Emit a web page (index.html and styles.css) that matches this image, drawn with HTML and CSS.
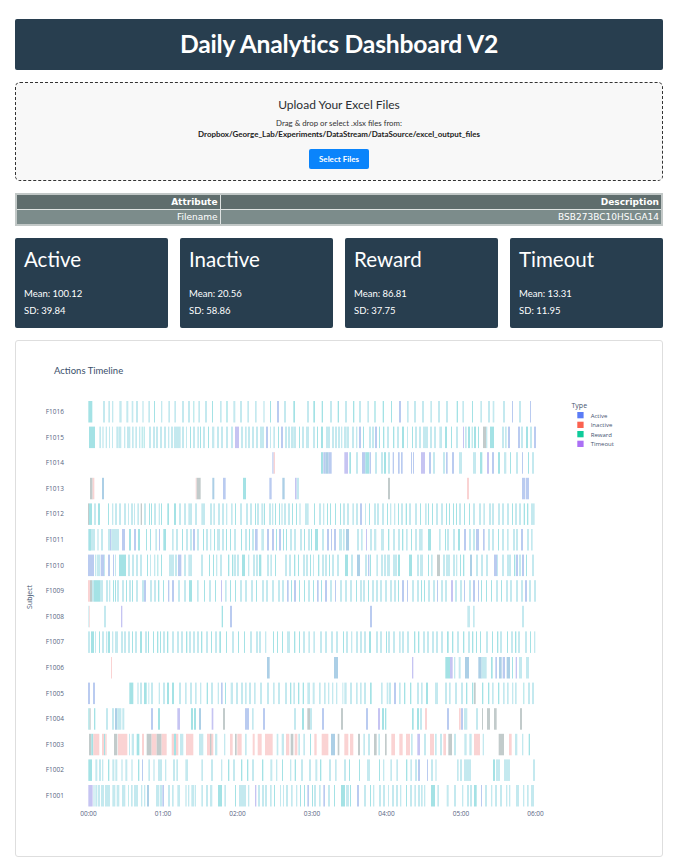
FILE: index.html
```html
<!DOCTYPE html>
<html lang="en">
<head>
<meta charset="utf-8">
<title>Daily Analytics Dashboard V2</title>
<link rel="stylesheet" href="styles.css">
</head>
<body>
<div class="page">
  <header class="title-bar"><h1>Daily Analytics Dashboard V2</h1></header>
  <section class="upload">
    <h2>Upload Your Excel Files</h2>
    <p class="hint">Drag &amp; drop or select .xlsx files from:</p>
    <p class="path">Dropbox/George_Lab/Experiments/DataStream/DataSource/excel_output_files</p>
    <button class="select-btn">Select Files</button>
  </section>
  <table class="meta">
    <tr><th class="col-a">Attribute</th><th>Description</th></tr>
    <tr><td class="col-a">Filename</td><td>BSB273BC10HSLGA14</td></tr>
  </table>
  <section class="cards">
    <div class="card"><h3>Active</h3><p>Mean: 100.12</p><p>SD: 39.84</p></div>
    <div class="card"><h3>Inactive</h3><p>Mean: 20.56</p><p>SD: 58.86</p></div>
    <div class="card"><h3>Reward</h3><p>Mean: 86.81</p><p>SD: 37.75</p></div>
    <div class="card"><h3>Timeout</h3><p>Mean: 13.31</p><p>SD: 11.95</p></div>
  </section>
  <section class="chart">
    <svg id="timeline" class="plot" width="646" height="515" viewBox="0 0 646 515" xmlns="http://www.w3.org/2000/svg">
      <text class="plot-title" x="38" y="33">Actions Timeline</text>
      <text class="axis-title" transform="translate(15.500 256) rotate(-90)" text-anchor="middle">Subject</text>
      <g class="legend">
        <text class="legend-title" x="555.500" y="67">Type</text>
        <rect x="561.300" y="71" width="6.300" height="6.300" fill="#5b7cf6"/><text x="574.700" y="76.700">Active</text>
        <rect x="561.300" y="80.700" width="6.300" height="6.300" fill="#fb6250"/><text x="574.700" y="86">Inactive</text>
        <rect x="561.300" y="90" width="6.300" height="6.300" fill="#0fcb9a"/><text x="574.700" y="95.700">Reward</text>
        <rect x="561.300" y="99.700" width="6.300" height="6.300" fill="#ab70f5"/><text x="574.700" y="105">Timeout</text>
      </g>
      <g id="bars" class="bars"></g>
      <g id="labels" class="tick"></g>
    </svg>
  </section>
</div>
<script src="app.js"></script>
</body>
</html>
```
FILE: styles.css
```css
* { box-sizing: border-box; }
html, body { margin: 0; padding: 0; background: #fff; }
body { font-family: Lato, "Open Sans", sans-serif; color: #2c3e50; }
.page { display: flex; flex-direction: column; gap: 12px; padding: 19px 14px 8px 15px; }
.title-bar { height: 51px; background: #283e4f; border-radius: 2px; display: flex; align-items: center; justify-content: center; }
.title-bar h1 { margin: 0; color: #fff; font-size: 24.700px; font-weight: 700; line-height: 1; letter-spacing: -0.2px; }
.upload { height: 99px; background: #f8f8f8; border: 1px dashed #333; border-radius: 5px; display: flex; flex-direction: column; align-items: center; padding-top: 14px; }
.upload h2 { margin: 0 0 5.500px; font-size: 12px; font-weight: 400; line-height: 15px; color: #2b2f33; }
.hint { margin: 0; font-size: 7.800px; line-height: 11.500px; color: #333; }
.path { margin: 0 0 8px; font-size: 7.950px; line-height: 11.500px; font-weight: 700; color: #222; }
.select-btn { width: 60px; height: 20px; padding: 0; border: 0; border-radius: 2px; background: #0a84fb; color: #fff; font: 700 8px Lato, sans-serif; }
.meta { width: 100%; height: 33px; border-collapse: collapse; border: 2px solid #c2c8c7; table-layout: fixed; color: #fff; font-family: "DejaVu Sans", sans-serif; font-size: 9px; }
.meta th, .meta td { padding: 0 2px 0 0; border: 1px solid #dfe3e2; text-align: right; height: 15px; line-height: 13px; }
.meta th { background: #5f6d6d; font-weight: 700; }
.meta td { background: #7c8c8b; font-weight: 400; }
.meta .col-a { width: 204px; }
.cards { display: grid; grid-template-columns: repeat(4, 1fr); gap: 12px; }
.card { height: 90px; padding: 8px 9px 0; background: #283e4f; border-radius: 2px; color: #fff; }
.card h3 { margin: 0 0 13px; font-size: 20.500px; font-weight: 400; line-height: 26px; }
.card p { margin: 0; font-size: 9.500px; line-height: 17px; }
.chart { height: 517px; border: 1px solid #dedede; border-radius: 3px; background: #fff; }
.plot { display: block; font-family: "Open Sans", Lato, sans-serif; }
.plot-title { font-family: Lato, sans-serif; font-size: 9.500px; fill: #3b4f6b; }
.axis-title { font-size: 7px; fill: #3b4f6b; }
.legend text { font-size: 6px; fill: #44546f; }
.legend .legend-title { font-size: 7px; }
.tick text { font-size: 6.500px; fill: #56657f; }
.bars { filter: blur(0.35px); }
```
FILE: app.js
```js
(function () {
  var NS = 'http://www.w3.org/2000/svg';
  var OX = 16, OY = 341;
  var X0 = 88.5, HOUR = 74.5, TOP = 401, STEP = 25.6, BAR_H = 21.5;
  var COL = { c: '#c4e9ef', t: '#a4e2e5', b: '#bacbf0', p: '#fad3d3', g: '#c2cbcb', l: '#c6c4f2', n: '#accfe6' };

  // Each row: segments of [origin x, "from-to[colour]" measured at 1/3 px].
  var rows = [
    ['F1016', [
      [30, '175-187t 219-225 235-240 246-250 268-275 289-295 305-310 318-324 337-341 355-360 372-375t 393-397 415-420 433-438 456-462 474-480 490-493t 505-510 525-531 546-549t 570-575 589-593t 610-616 630-636 652-657 675-680 700-704 720-723t 741-747b'],
      [280, '12-18 40-45t 81-87 100-105t 125-129t 150-156 173-177t 195-201 219-223t 237-243 262-267 283-287t 308-312t 333-336t 357-363b 381-386 402-408 426-432 451-456 474-480 498-504 530-534t 547-552 576-579t 601-606 624-630 638-643 669-675 696-699b 717-723 750-753b']
    ]],
    ['F1015', [
      [30, '177-195t 208-213 217-221 227-231 237-240 246-249 259-264 265-274 282-286 291-301 306-311 316-321 327-331 335-338t 341-344t 357-363 369-375 378-384 390-396 402-408 414-418 423-429 432-441 441-452 456-462 468-471 480-483t 489-495 502-507 510-513t 519-525 534-537t 546-553 561-567 573-579 588-594 603-609 615-627l 633-639 645-650 654-660 666-672 678-684 690-702 708-714b 720-723 730-735 744-747t'],
      [280, '3-9b 15-21 24-30 33-40 40-48 57-60t 66-72 78-87 99-105 111-114t 123-129t 138-150 156-162 165-171 174-180 183-187 192-200 201-207 216-222 228-232 237-243b 249-252t 267-273 276-282 285-291b 297-300t 309-313t 321-327 339-343t 351-357 366-372t 381-384 396-399t 405-411 417-423 429-444 450-456 462-468 478-486 495-501t 513-516t 528-534 549-552l 555-560 564-570t 575-578t 582-588t 594-597t 609-618g 618-622 630-642t 666-672 675-680 684-690b 714-720b 723-729 738-744t 750-756 762-768b']
    ]],
    ['F1014', [
      [30, '727-731b 731-735p'],
      [280, '123-129t 130-136b 136-146n 146-155b 193-204l 208-213t 228-234 246-256b 256-268t 269-273b 285-291 303-309 312-318t 324-330 338-342b 354-359b 363-368b 393-396b 399-402b 423-435l 447-453b 459-465 489-495 498-503b 516-522b 537-546 579-588 600-607t 621-627l 636-642b 654-660t 672-679 690-693t 708-714 726-729b 744-747t 756-762']
    ]],
    ['F1013', [
      [30, '180-188g 188-193p 216-222n 497-500p 500-512g 547-553n 579-587b 639-648t 718-725b'],
      [280, '7-14n 45-50l 50-57 324-330g 561-567p 726-736b 738-747b']
    ]],
    ['F1012', [
      [80, '24-27g 27-36t 42-48c 54-60t 84-87t 96-100 105-111 117-123 132-138 144-147 153-159 162-165 172-177 182-186g 192-198 207-210t 213-216t 222-228 236-240 243-246t 262-267t 282-288t 297-303 312-318 325-336 345-351 364-375 390-396 400-405 414-420 426-432 438-442 453-458 465-468t 480-486 498-504 510-516 525-528t 531-537 544-550 552-555t 567-573 576-580 585-588t 597-600t 604-608 612-618 624-630 636-639t 648-651t 658-662 675-686'],
      [310, '12-15t 27-33 39-43 51-54t 60-63t 75-78t 90-93t 99-105 111-117 127-132 138-144 150-156b 165-168 177-180t 192-198 201-207 216-222 231-234t 240-244 252-256 264-267t 273-279 287-291t 297-303 315-321 330-333t 345-350 354-357t 366-369t 378-384 393-399 408-411t 417-420t 429-432t 438-441t 447-453 462-465t 477-480t 489-495 507-513 520-525 537-543 546-552 564-570 576-582 591-597 606-609t 615-621 627-633 641-645t 651-655t 663-674']
    ]],
    ['F1011', [
      [80, '24-45 27-33t 52-56 63-69 84-90 90-94b 94-117 126-135b 147-153t 162-168b 174-180t 198-201t 210-213t 226-231 237-240b 250-258t 276-281 288-294 306-309t 318-324 330-336 339-345b 351-357 369-372t 378-384 390-394 402-405t 411-420 426-432 438-441t 450-453t 462-468 483-486t 495-501 507-510t 516-522 525-533b 544-552 561-567b 576-582b 588-591t 597-603b 609-612t 618-621t 630-636 642-648 660-666 672-675t 684-690'],
      [310, '3-6t 15-24t 36-42 51-57b 63-66b 72-78b 87-96 99-104 108-117n 141-147 153-158 168-171l 180-186 192-199 213-222 234-238t 249-255 264-270 276-280t 288-293 303-306t 315-321 327-338 354-363t 387-392 405-408t 411-417 429-435 444-450t 462-468b 477-483 489-495 498-507b 519-524b 534-540 546-552 564-567t 576-582 591-596 609-615 618-624 633-639b 651-657 663-668']
    ]],
    ['F1010', [
      [80, '24-42b 45-48 50-60 62-72b 72-75 84-90b 99-102b 105-108 117-138t 144-150 156-162 168-174 180-186 201-204t 210-213 222-226 232-235t 243-246t 267-282 285-291 294-304b 312-318 325-336 363-369 387-390t 399-402t 408-412 420-426 444-448t 456-460t 462-468 471-477 486-495t 504-508 519-525 528-534 537-544t 561-567 571-576 585-588t 615-621 627-633 642-646t 654-657t 669-675 678-684'],
      [310, '0-3t 9-12 24-28t 36-42 45-51 57-60t 66-72 81-87 105-114t 123-129 141-150n 165-171 174-178b 180-183t 199-204 213-219 222-228 231-240 249-261 264-270t 297-306t 321-327 330-339 354-357t 363-368 381-390g 399-405 408-420 429-435 438-442 450-453t 459-463t 480-486n 498-504 513-519 528-534 552-561b 561-564 576-582 591-603 612-616t 618-624b 627-633 636-642b 648-651t 666-672']
    ]],
    ['F1009', [
      [80, '24-30p 30-36g 36-42 42-60t 60-69 78-84 87-91 99-102t 105-108t 111-117 126-132 138-141t 147-153 156-159t 168-174 186-192 192-198b 210-216 222-228 234-238t 249-252t 264-268b 276-282b 294-300 312-318 327-336t 351-356 372-375t 387-393 405-408t 423-426l 435-440 450-453t 465-468t 480-486 495-501 513-519 528-531t 546-552 558-564 576-582 594-600 606-612 621-626b 633-636t 642-648b 657-660t 672-675t 684-690'],
      [310, '9-12t 21-26b 33-36t 45-51b 60-66 75-78b 90-96 105-111 120-126 138-141t 150-156 159-165 174-177t 186-192 198-204 210-216 225-231 240-246 252-258 264-267t 276-282b 291-294b 306-312 321-327 333-336t 342-345t 354-360 369-375 381-384b 393-399 405-411 423-429l 435-441 450-456 462-465b 477-483 489-495b 504-507b 513-516t 528-531t 543-546t 558-564 573-576t 588-594 600-606 618-624 633-639 645-651b 657-663 672-678']
    ]],
    ['F1008', [
      [80, '25-28 28-30p 72-78 123-127l 425-429t 450-456b'],
      [310, '180-186b 472-480 489-494 636-642']
    ]],
    ['F1007', [
      [80, '24-30 33-42t 45-48 57-60t 66-72 78-82 84-90t 96-100 105-114 123-129 132-138 144-150 156-159t 165-171 180-186t 195-201 204-207t 219-222t 231-235t 240-243t 249-255 261-265t 276-282 291-297 303-309 318-322t 327-333 339-345 351-357 363-367t 378-384 393-396t 405-411 418-423t 438-441t 456-462 474-477t 492-495t 510-516 528-534 537-543 555-559 579-582t 591-594t 606-609t 621-630 642-646t 657-660t 669-675 685-690'],
      [310, '10-15 30-36 45-51 63-69 78-84 99-102t 108-114 123-127 138-144 150-156 162-168 177-183t 198-204 210-216 228-231t 234-240 249-255 267-272 276-282 291-297 312-316t 324-328t 339-345 351-357 366-372 378-384 393-399 411-416t 426-430t 441-447 459-463t 474-480 486-490t 498-501t 510-513t 528-534 546-549t 561-565t 570-576 591-594t 603-609 615-619t 624-630 645-651 660-663t 672-676']
    ]],
    ['F1006', [
      [80, '93-96p 561-569n'],
      [310, '72-84n 306-310l 406-420t 420-428l 432-436 446-452 465-477n 505-515n 515-530 543-548t 556-561b 567-575n 578-585b 590-600n 606-609t 617-621l 627-636 648-657']
    ]],
    ['F1005', [
      [80, '24-30b 39-45b 148-160t 172-176 180-186 192-200t 205-208 213-219 236-240 249-255 261-267t 276-282t 297-303 315-320 330-336 345-350 360-364 380-384t 393-399 413-417 423-428b 435-438t 452-459 468-474 483-489 495-500 507-513 522-527 540-546 561-567 579-584 594-600 615-621 630-634t 640-645 654-658t 668-672t 682-690'],
      [310, '8-14 27-32 42-47 54-58 66-70 78-82 97-100 103-110 120-126 138-143 150-155 162-168 180-185t 213-218 230-235 237-243 252-258b 267-272 282-286t 300-304t 321-327 333-338 348-354t 375-384 405-411 417-422 435-441 453-459 468-472t 486-490t 492-497g 516-520t 534-538t 546-551 564-568t 579-584 591-596 606-610 615-620 640-643t 654-660 666-672']
    ]],
    ['F1004', [
      [80, '25-29t 29-32g 42-46t 78-84 96-102 105-112n 112-124 127-133 213-219b 234-240t 292-300l 333-339t 342-348t 357-363n 395-400l 429-435g 495-507b 516-521 549-555b 642-648 666-672t 682-690g'],
      [310, '0-6 36-42b 93-99g 168-174b 204-210l 216-222t 225-229t 306-311t 321-327t 330-336 345-351p 411-417b 447-452p 453-459b 462-472 498-504 516-519g 531-540g 552-560g 630-636g']
    ]],
    ['F1003', [
      [20, '207-214g 214-220t 220-238p 246-252p 252-256t 256-260p 282-292g 294-300p 300-322p 327-330 335-342 350-358t 366-372p 380-395g 395-410p 410-425g 425-440p 455-475p 462-468t 480-490 498-520p 537-550 561-580p 570-574g 585-592 612-616 630-638p 645-650g 652-665p 675-680 698-704p 713-725p 735-758p 770-775'],
      [280, '5-12 18-28p 32-40g 44-52p 55-60 70-75 90-93t 103-110p 125-145p 153-165n 173-178g 193-205p 210-220p 234-240g 250-255 264-270 282-290g 295-300 315-320g 334-345p 358-368p 378-390p 393-398 412-420l 432-438 450-462p 465-470 480-486 490-498p 505-516g 522-528 553-560 568-575 582-600p 608-612 656-672g 687-695p 705-712 726-730 746-750t']
    ]],
    ['F1002', [
      [20, '205-216t 226-232 237-243 246-250 264-268t 277-283 286-292 304-308 316-322 334-338 354-358t 366-369b 385-390 400-404 414-426 435-439 459-465 469-474 496-504 544-549 573-579 603-607 624-628t 639-645 663-667t 681-685t 696-702 726-730t 751-757 768-772'],
      [280, '6-9t 30-34 44-48t 63-69 87-93 106-112 120-124t 147-153 165-170 192-198 207-210t 237-240t 261-270 297-300t 309-313 331-336 349-354 378-382t 391-396 405-411 414-420b 441-444b 453-459 466-470 531-536 540-546 552-573 639-645t 648-660 672-690 759-765']
    ]],
    ['F1001', [
      [20, '205-218l 220-224 226-232 234-240 243-252 255-270 277-286 290-298 306-316 324-326t 333-338 342-354 363-367 372-376 381-387n 408-418 420-426 427-432b 444-450 456-461 472-480 496-500 504-508 514-522 524-528 544-549 558-564 570-577 594-606t 613-618 645-648t 657-678 684-688 705-709l 714-720 726-732 735-741 750-755 762-765t'],
      [280, '0-3 9-12 18-24 33-38 48-52 60-63t 72-75t 82-87b 96-99t 102-108 117-122 130-135b 144-150 162-165t 183-195t 198-207 210-213t 231-237b 252-258 270-273t 279-283 297-303 309-315 324-327 336-342 348-354 360-364 378-381t 390-396 403-408 414-420 423-428 432-436 453-465t 472-477 500-506 522-528 546-550 561-567 570-576 582-590t 603-606b 615-621 633-637 645-651 660-666 678-682 687-691 708-717 729-733 741-746 753-762']
    ]]
  ];

  var barsEl = document.getElementById('bars');
  var labelsEl = document.getElementById('labels');

  function addBar(x, y, w, color) {
    var r = document.createElementNS(NS, 'rect');
    r.setAttribute('x', (x - OX).toFixed(2));
    r.setAttribute('y', y.toFixed(2));
    r.setAttribute('width', w.toFixed(2));
    r.setAttribute('height', BAR_H);
    r.setAttribute('fill', color);
    barsEl.appendChild(r);
  }

  function addLabel(x, y, str, anchor) {
    var t = document.createElementNS(NS, 'text');
    t.setAttribute('x', x - OX);
    t.setAttribute('y', y);
    t.setAttribute('text-anchor', anchor);
    t.textContent = str;
    labelsEl.appendChild(t);
  }

  rows.forEach(function (row, i) {
    var top = TOP + i * STEP - OY;
    addLabel(64, top + 13, row[0], 'end');
    row[1].forEach(function (seg) {
      seg[1].split(' ').forEach(function (item) {
        var m = /^(\d+)-(\d+)([a-z]?)$/.exec(item);
        var from = Number(m[1]), to = Number(m[2]);
        addBar(seg[0] + from / 3, top, (to - from) / 3, COL[m[3] || 'c']);
      });
    });
  });

  for (var h = 0; h <= 6; h++) {
    addLabel(X0 + h * HOUR, 816 - OY, '0' + h + ':00', 'middle');
  }
})();
```
